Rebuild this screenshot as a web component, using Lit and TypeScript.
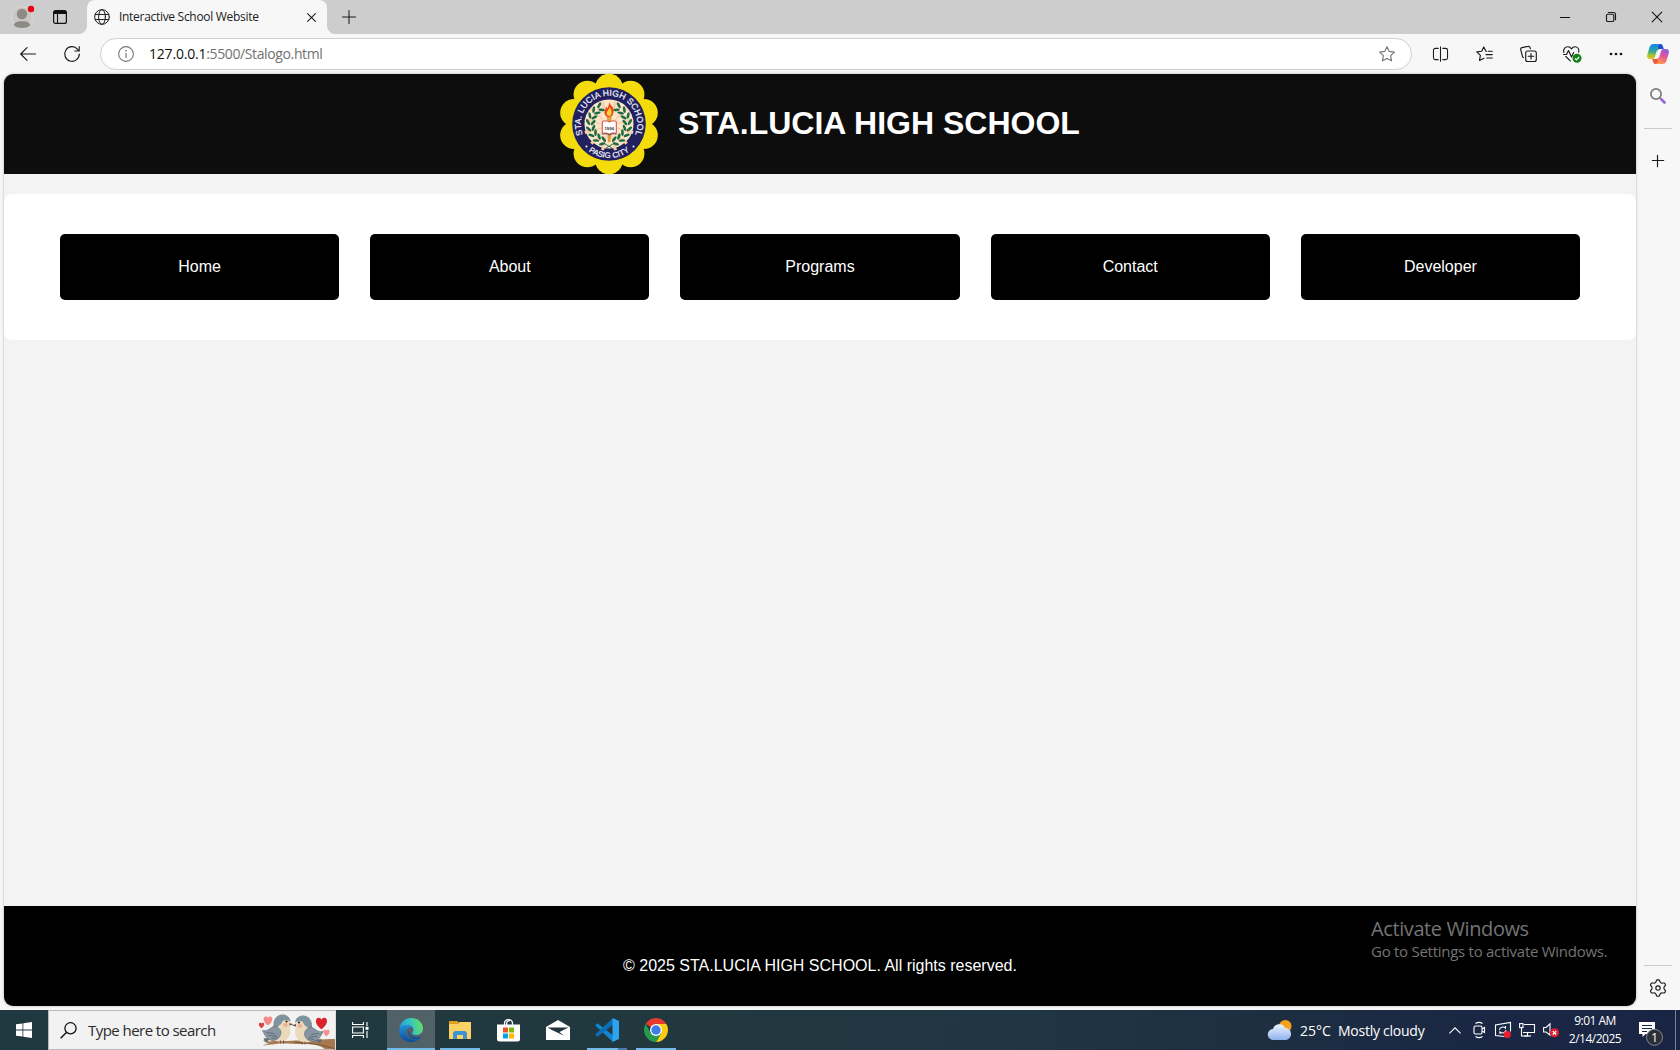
import { LitElement, html, svg, css } from "lit";
import { customElement } from "lit/decorators.js";

const iconStyles = css`
  svg { display: block; flex: none; overflow: visible; }
  .ln { fill: none; stroke: #1b1b1b; stroke-width: 1.15; stroke-linecap: round; stroke-linejoin: round; }
`;

@customElement("tab-strip")
class TabStrip extends LitElement {
  static styles = [iconStyles, css`
    :host { display: flex; height: 34px; background: #cdcdcd; align-items: stretch; }
    .cell { display: flex; align-items: center; justify-content: center; }
    .avatar { width: 44px; }
    .space { width: 32px; }
    .tab { display: flex; align-items: center; position: relative; box-sizing: border-box; width: 240px; margin-left: 11px; padding: 0 11px 0 7px; background: #f7f7f7; border-radius: 8px 8px 0 0; font-size: 12px; color: #1b1b1b; }
    .tab::before, .tab::after { content: ""; position: absolute; bottom: 0; width: 8px; height: 8px; }
    .tab::before { left: -8px; background: radial-gradient(circle at 0 0, #cdcdcd 7.5px, #f7f7f7 8.2px); }
    .tab::after { right: -8px; background: radial-gradient(circle at 100% 0, #cdcdcd 7.5px, #f7f7f7 8.2px); }
    .title { flex: 1; padding: 0 0 1px 9px; white-space: nowrap; letter-spacing: -0.3px; }
    .tab .ln, .add .ln { stroke-width: 1.05; }
    .add { width: 43px; }
    .fill { flex: 1; }
    .win { width: 46px; }
  `];
  render() {
    return html`
      <div class="cell avatar"><svg width="24" height="24" viewBox="0 0 24 24">
        <circle cx="12" cy="12" r="10.3" fill="#c9c7c5" stroke="#dedbd6" stroke-width=".8"/>
        <circle cx="12" cy="9" r="5.2" fill="#8d8985"/><path d="M4 20.5c0-3 3-4.300 8-4.300s8 1.300 8 4.300c-2 1.800-5 2.500-8 2.500s-6-.7-8-2.500z" fill="#8d8985"/>
        <circle cx="21" cy="4" r="3.200" fill="#e8000f"/></svg></div>
      <div class="cell space"><svg width="14" height="14" viewBox="0 0 14 14"><rect x=".6" y=".6" width="12.800" height="12.800" rx="2" fill="none" stroke="#111" stroke-width="1.200"/><path d="M.6 4V2.600a2 2 0 0 1 2-2h8.800a2 2 0 0 1 2 2V4z" fill="#111"/><path d="M4.500 4v9.400" stroke="#111" stroke-width="1.100"/></svg></div>
      <div class="tab">
        <svg width="16" height="16" viewBox="0 0 17 17"><g class="ln"><circle cx="8.500" cy="8.500" r="7.800"/><ellipse cx="8.500" cy="8.500" rx="3.600" ry="7.800"/><path d="M1.300 5.800h14.400M1.300 11.200h14.400"/></g></svg>
        <span class="title">Interactive School Website</span>
        <svg width="9" height="9" viewBox="0 0 9 9"><path class="ln" d="M.6.6l7.800 7.800M8.400.6L.6 8.400"/></svg>
      </div>
      <div class="cell add"><svg width="14" height="14" viewBox="0 0 14 14"><path class="ln" d="M7 .5v13M.5 7h13"/></svg></div>
      <div class="fill"></div>
      <div class="cell win"><svg width="10" height="10" viewBox="0 0 10 10"><path d="M0 5.500h10" stroke="#111"/></svg></div>
      <div class="cell win"><svg width="10" height="10" viewBox="0 0 10 10"><g class="ln"><rect x=".5" y="2.200" width="7.300" height="7.300" rx="1.300"/><path d="M2.300.5h5.200a2 2 0 0 1 2 2v5.200"/></g></svg></div>
      <div class="cell win"><svg width="10" height="10" viewBox="0 0 10 10"><path class="ln" d="M.2.2l9.600 9.600M9.800.2L.2 9.800"/></svg></div>
    `;
  }
}

@customElement("address-bar")
class AddressBar extends LitElement {
  static styles = [iconStyles, css`
    :host { display: flex; height: 40px; align-items: center; padding-left: 6px; background: #f7f7f7; }
    .cell { display: flex; align-items: center; justify-content: center; width: 44px; flex: none; }
    .copilot { width: 40px; }
    .omni { display: flex; align-items: center; box-sizing: border-box; width: 1312px; height: 32px; margin: 0 6px; padding: 0 16px 0 17px; border: 1px solid #d0d0d0; border-radius: 16px; background: #fff; font-size: 14px; color: #717171; }
    .url { flex: 1; padding: 0 0 2px 15px; letter-spacing: -0.38px; white-space: nowrap; }
    .host { color: #111; letter-spacing: -0.2px; }
  `];
  render() {
    const star = "M8 .7l2.250 4.700 5.150.7-3.750 3.600.9 5.150L8 12.400l-4.550 2.450.9-5.150L.6 6.100l5.150-.7z";
    return html`
      <div class="cell"><svg width="16" height="14" viewBox="0 0 16 14"><path class="ln" d="M15.500 7H.7M7 .7L.7 7 7 13.300"/></svg></div>
      <div class="cell"><svg width="16" height="16" viewBox="0 0 16 16"><path class="ln" d="M15.300 8A7.300 7.300 0 1 1 13.600 3.300L15 4.900M15.200.6V5h-4.400"/></svg></div>
      <div class="omni">
        <svg width="16" height="16" viewBox="0 0 16 16"><circle cx="8" cy="8" r="7.400" fill="none" stroke="#777" stroke-width="1.100"/><path d="M8 7v5" stroke="#777" stroke-width="1.200"/><circle cx="8" cy="4.700" r=".85" fill="#777"/></svg>
        <span class="url"><span class="host">127.0.0.1</span>:5500/Stalogo.html</span>
        <svg width="16" height="16" viewBox="0 0 16 16"><path class="ln" style="stroke:#777" d=${star}/></svg>
      </div>
      <div class="cell"><svg width="15" height="16" viewBox="0 0 16 16"><path class="ln" d="M5.500 2H2.500a2 2 0 0 0-2 2v8a2 2 0 0 0 2 2h3M10.500 2h3a2 2 0 0 1 2 2v8a2 2 0 0 1-2 2h-3M8 .2v15.600"/></svg></div>
      <div class="cell"><svg width="17" height="16" viewBox="0 0 17 16"><path class="ln" d="M10.600 5.200H9.900L7.800.9 5.700 5.200.8 5.900l3.600 3.500-.9 5 4.500-2.100M12.300 5.200h4M10 8.600h6.300M10.800 12h5.500"/></svg></div>
      <div class="cell"><svg width="17" height="16" viewBox="0 0 17 16"><g class="ln"><rect x="5.700" y="5" width="10.600" height="10.500" rx="2"/><path d="M11 7.500v5.500M8.200 10.200h5.600M3.500 11.700L2.600 10.800.7 3.600a1.700 1.700 0 0 1 1.200-2L8 .4a1.700 1.700 0 0 1 2 1.100l.4 1.300"/></g></svg></div>
      <div class="cell"><svg width="18" height="16" viewBox="0 0 18 16"><path class="ln" d="M.9 6.500C-.2 2.800 2.500.7 5 .8c1.800.1 2.800 1.100 3.500 2 .7-.9 1.700-1.900 3.500-2 2.500-.1 4.600 2.200 3.700 5.400M.5 8.500h3l2-4 3 6.500 2.200-4.400M2.800 10.500l4.500 4.300"/><circle cx="14" cy="12.300" r="4.500" fill="#16801a"/><path d="M12 12.400l1.400 1.400 2.700-2.800" fill="none" stroke="#fff" stroke-width="1.200"/></svg></div>
      <div class="cell"><svg width="14" height="4" viewBox="0 0 14 4"><circle cx="2" cy="2" r="1.350" fill="#111"/><circle cx="7" cy="2" r="1.350" fill="#111"/><circle cx="12" cy="2" r="1.350" fill="#111"/></svg></div>
      <div class="cell copilot"><svg width="22" height="20" viewBox="0 0 22 20">
        <defs>
          <linearGradient id="a" x1=".3" y1="0" x2=".2" y2="1"><stop offset="0" stop-color="#168ce8"/><stop offset=".45" stop-color="#2ba5a0"/><stop offset=".75" stop-color="#a4c832"/><stop offset="1" stop-color="#f0b91e"/></linearGradient>
          <linearGradient id="b" x1=".7" y1="0" x2=".4" y2="1"><stop offset="0" stop-color="#8c5ae6"/><stop offset=".45" stop-color="#e0559c"/><stop offset="1" stop-color="#ff9a4a"/></linearGradient>
        </defs>
        <path d="M11 0h2.500c1.600 0 2 .9 2.500 2.500L16.800 5H13c-1.700 0-2.300.8-2.800 2.500z" fill="#1b50c4"/>
        <path d="M11 20H8.500c-1.600 0-2-.9-2.500-2.500L5.200 15H9c1.700 0 2.300-.8 2.800-2.500z" fill="#ee5a38"/>
        <path d="M6.500 0h7c-1.600.3-2 1.500-2.500 3L8.200 12c-.6 2-1.200 3-3 3H3c-2.200 0-3.300-1.500-2.800-4L2.600 3C3.300 1 4.500 0 6.500 0z" fill="url(#a)"/>
        <path d="M15.500 20h-7c1.600-.3 2-1.500 2.500-3l2.800-9c.6-2 1.200-3 3-3H19c2.200 0 3.300 1.500 2.800 4l-2.400 8c-.7 2-1.900 3-3.900 3z" fill="url(#b)"/></svg></div>
    `;
  }
}

@customElement("school-seal")
class SchoolSeal extends LitElement {
  static styles = css`
    :host { display: block; width: 100px; height: 100px; }
    svg { display: block; }
    text { font-family: "Liberation Sans", Arial, sans-serif; fill: #f4f4ff; }
  `;
  render() {
    const petals = Array.from({ length: 10 }, (_, i) => {
      const a = (i * Math.PI) / 5;
      return svg`<circle cx=${50 + 36.800 * Math.sin(a)} cy=${50 - 36.500 * Math.cos(a)} r="13.800" fill="#f4dc0c"/>`;
    });
    const rays = Array.from({ length: 12 }, (_, i) => svg`<path d="M50 52L48.400 27h3.200z" transform="rotate(${i * 30 + 15} 50 52)" fill="#f8cfa8"/>`);
    const leaves = Array.from({ length: 8 }, (_, i) => {
      const a = ((-62 + i * 19) * Math.PI) / 180;
      const x = 18.500 * Math.cos(a);
      const y = 50 + 18.500 * Math.sin(a);
      const d = -62 + i * 19;
      return svg`<g transform="translate(${x} ${y}) rotate(${d - 90})"><ellipse cx="1.500" cy="-2" rx="3.300" ry="1.350" transform="rotate(-35)" /><ellipse cx="1.500" cy="2" rx="3.300" ry="1.350" transform="rotate(35)"/></g>`;
    });
    return html`<svg width="100" height="100" viewBox="0 0 100 100">
      ${petals}
      <circle cx="50" cy="50" r="38" fill="#f4dc0c"/>
      <circle cx="50" cy="50" r="36.800" fill="#22215f"/>
      <circle cx="50" cy="50" r="24.500" fill="#fbe6c9"/>
      ${rays}
      <g fill="#1c6b45"><g transform="translate(50 0)">${leaves}</g><g transform="translate(50 0) scale(-1 1)">${leaves}</g></g>
      <path d="M46 70l7 4M54 70l-7 4" stroke="#1c6b45" stroke-width=".9"/>
      <path d="M50 28c1 3 5.500 5 4.500 10-.3 3-2 5-4.500 5s-5-2-4.500-5.500c.3-2 1.500-3 1.700-5 .8.5 1 1.200 1.300 2 .8-2 1.500-3.500 1.500-6.500z" fill="#e9471c"/>
      <path d="M50.500 33c1 2 2.500 3.500 2 6-.3 2-1.200 3-2.500 3s-2.700-1.300-2.300-3.500c.3-1.500 2.300-2.500 2.800-5.500z" fill="#ffd23a"/>
      <path d="M48 43h4.500l-.8 24-1.500 2-1.400-2z" fill="#e79a3b"/>
      <path d="M43.300 47.500c2.500-1 5-.8 7 .5 2-1.300 4.500-1.500 7-.5v12c-2.500-1-5-.5-7 .7-2-1.200-4.500-1.700-7-.7z" fill="#fdfdfd" stroke="#c63c36" stroke-width=".9"/>
      <path d="M43.300 60.300c2.500-1 5-.5 7 .7 2-1.200 4.500-1.700 7-.7" fill="none" stroke="#444" stroke-width=".8"/>
      <text x="50.300" y="55.500" font-size="4.400" font-weight="700" text-anchor="middle" style="fill:#333">1996</text>
      <defs><path id="top" d="M25.120 63.230A28.180 28.180 0 1 1 74.880 63.230"/><path id="bot" d="M20 66A34 34 0 0 0 80 66"/></defs>
      <text font-size="8.600" stroke="#f4f4ff" stroke-width=".2"><textPath href="#top" startOffset="50%" text-anchor="middle" textLength="110">STA. LUCIA HIGH SCHOOL</textPath></text>
      <text font-size="7.900" stroke="#f4f4ff" stroke-width=".2"><textPath href="#bot" startOffset="50%" text-anchor="middle" textLength="44">PASIG CITY</textPath></text>
      <circle cx="27.500" cy="72.500" r="1" fill="#fff"/><circle cx="74.500" cy="72.500" r="1" fill="#fff"/>
    </svg>`;
  }
}

@customElement("school-page")
class SchoolPage extends LitElement {
  static styles = css`
    :host { display: flex; flex-direction: column; position: relative; width: 1632px; height: 932px; border-radius: 9px; overflow: hidden; background: #f3f3f3; box-shadow: 0 0 3px rgba(0, 0, 0, .28); font-family: "Liberation Sans", Arial, sans-serif; font-size: 16px; color: #fff; }
    header { display: flex; align-items: center; justify-content: center; gap: 20px; height: 100px; background: #0d0d0d; }
    h1 { margin: 0 1px 0 -1px; padding-bottom: 2px; font-size: 32px; line-height: 36px; }
    nav { display: grid; grid-template-columns: repeat(5, 1fr); gap: 31px; margin-top: 20px; padding: 40px 56px; background: #fff; border-radius: 8px; }
    a { display: flex; align-items: center; justify-content: center; height: 66px; border-radius: 5px; background: #000; }
    footer { display: flex; align-items: center; justify-content: center; box-sizing: border-box; height: 100px; margin-top: auto; padding-top: 20px; background: #000; }
    .mark { position: absolute; left: 1367px; top: 841px; color: #747474; font-family: "Open Sans", "Noto Sans", sans-serif; white-space: nowrap; }
    .big { font-size: 20px; line-height: 27px; letter-spacing: -.4px; }
    .small { font-size: 15px; line-height: 19px; letter-spacing: -.27px; }
  `;
  render() {
    return html`
      <header><school-seal></school-seal><h1>STA.LUCIA HIGH SCHOOL</h1></header>
      <nav>${["Home", "About", "Programs", "Contact", "Developer"].map((t) => html`<a>${t}</a>`)}</nav>
      <footer>© 2025 STA.LUCIA HIGH SCHOOL. All rights reserved.</footer>
      <div class="mark"><div class="big">Activate Windows</div><div class="small">Go to Settings to activate Windows.</div></div>
    `;
  }
}

@customElement("edge-sidebar")
class EdgeSidebar extends LitElement {
  static styles = [iconStyles, css`
    :host { display: flex; flex-direction: column; align-items: center; width: 28px; padding: 14px 8px 0; }
    .rule { width: 28px; height: 1px; background: #cbcbcb; flex: none; }
    .one { margin: 24px 0 0; }
    .plus { margin-top: 26px; }
    .two { margin-top: auto; }
    .gear { margin: 13px 0 9px; }
  `];
  render() {
    const pts = Array.from({ length: 48 }, (_, i) => {
      const a = (i / 48) * Math.PI * 2;
      const r = 7.100 + 1.150 * Math.tanh(2.200 * Math.cos(a * 6));
      return `${(9 + r * Math.sin(a)).toFixed(2)} ${(9 - r * Math.cos(a)).toFixed(2)}`;
    }).join("L");
    return html`
      <svg width="16" height="16" viewBox="0 0 16 16"><circle cx="6" cy="6" r="5.100" fill="none" stroke="#7b7b7b" stroke-width="1.700"/><path d="M9.700 9.700l2 2" stroke="#7b7b7b" stroke-width="1.800"/><path d="M11.500 11.500l3 3" stroke="#9a67d8" stroke-width="2.800" stroke-linecap="round"/></svg>
      <div class="rule one"></div>
      <svg class="plus" width="12" height="12" viewBox="0 0 12 12"><path class="ln" d="M5.500.3v11.400M.3 5.500h11.400"/></svg>
      <div class="rule two"></div>
      <svg class="gear" width="18" height="18" viewBox="0 0 18 18"><path class="ln" d="M${pts}z"/><circle class="ln" cx="9" cy="9" r="2.200"/></svg>
    `;
  }
}

@customElement("task-bar")
class TaskBar extends LitElement {
  static styles = [iconStyles, css`
    :host { display: flex; height: 40px; background: linear-gradient(90deg, #20383f 0, #21383f 42%, #203643 60%, #1d2e41 76%, #1a2744 88%, #1a2545 100%); color: #fff; }
    .cell { display: flex; align-items: center; justify-content: center; position: relative; width: 49px; flex: none; }
    .start { width: 48px; }
    .view { width: 51px; box-sizing: border-box; padding-right: 2px; }
    .edge { width: 48px; background: #506268; }
    .run::after, .edge::after { content: ""; position: absolute; left: 5px; bottom: 0; width: 40px; height: 2px; background: #76b9ed; }
    .edge::after { left: 0; width: 48px; }
    .multi::after { background: linear-gradient(90deg, #76b9ed 31px, #4a7aa8 31px); }
    .search { display: flex; align-items: center; box-sizing: border-box; width: 288px; border: 1px solid #b9b9b9; border-right-color: #ddd; background: #f2f2f2; color: #2b2b2b; font-size: 15px; padding-left: 11px; }
    .hint { flex: 1; padding-left: 11px; letter-spacing: -.55px; white-space: nowrap; }
    .weather { display: flex; align-items: center; margin-left: auto; width: 175px; font-size: 14px; white-space: nowrap; }
    .temp { width: 38px; padding-left: 8px; }
    .sky { letter-spacing: -.25px; }
    .tray { width: 24px; }
    .w { fill: none; stroke: #fff; stroke-width: 1.100; }
    .clock { display: flex; flex-direction: column; align-items: center; width: 64px; padding-top: 2px; box-sizing: border-box; font-size: 12px; line-height: 17.500px; letter-spacing: -.5px; }
    .notif { width: 40px; }
    .desk { width: 8px; padding-right: 0; }
    .peek { width: 4px; border-left: 1px solid #76808f; }
  `];
  bird() {
    return svg`
      <path d="M-17 10l9-1-7 5z" fill="#5f7079"/>
      <path d="M-17 9C-10 5-8 1-7-4c0-6 4-10 9-10 5 0 8 4 8 8 0 3-1 4 0 8 0 6-4 11-10 11-7 0-10-3-17-4z" fill="#ead9ba"/>
      <path d="M-7-4c0-6 4-10 9-10 5 0 8 4 8 7-6-3-8-1-9 2-3 2-4 5-8 4z" fill="#7d949f"/>
      <path d="M-18 2C-14 3-12 1-9-1-7-3-2-2 0 2c2 5-3 10-8 10-4 0-8-5-10-10z" fill="#8796a2" stroke="#56666f" stroke-width=".6"/>
      <path d="M-14 4l8 1M-12 7l8 .5M-9 10l6-1" stroke="#48606d" stroke-width=".7"/>
      <circle cx="5" cy="-3.500" r="2.100" fill="#ecae99"/><circle cx="6" cy="-7" r="1.100" fill="#26201c"/>
      <path d="M9-5.500l4 1.500-4 1z" fill="#635145"/>
      <path d="M0 12v3M3 12v3" stroke="#65493a" stroke-width=".8"/>`;
  }
  heart(x: number, y: number, s: number, c: string) {
    return svg`<path transform="translate(${x} ${y}) scale(${s})" d="M0 5C-7 0-5-5-2.500-5-1-5 0-4 0-3c0-1 1-2 2.500-2C5-5 7 0 0 5z" fill=${c}/>`;
  }
  render() {
    return html`
      <div class="cell start"><svg width="16" height="16" viewBox="0 0 16 16"><path d="M0 2.300l6.500-.9v6.200H0zM7.300 1.300L16 0v7.600H7.300zM0 8.400h6.500v6.200L0 13.700zM7.300 8.400H16V16l-8.700-1.300z" fill="#fff"/></svg></div>
      <div class="search">
        <svg width="17" height="17" viewBox="0 0 17 17"><circle cx="10.500" cy="6.300" r="5.600" fill="none" stroke="#111" stroke-width="1.300"/><path d="M6.600 10.300L.6 16.300" stroke="#111" stroke-width="1.400"/></svg>
        <span class="hint">Type here to search</span>
        <svg width="76" height="38" viewBox="0 0 76 38">
          <path d="M4 29c4 1 7 2 10 1 5-1 8 0 14 0 12-1 22 0 30-1 6-1 12-1 18-1v10H66c-5-4-12-5-22-5-12 0-20-1-27 0-5 1-9 0-13 2 2-2 4-2 6-3-3 0-4-1-6-3z" fill="#a87950"/>
          <path d="M35 31c12 1 28 2 41 7" stroke="#7e5637" fill="none"/>
          <g transform="translate(21.500 17.500)">${this.bird()}</g><g transform="translate(46 18.500) scale(-1 1)">${this.bird()}</g>
          ${this.heart(9, 10, .9, "#f58a85")}${this.heart(2.500, 14.500, .55, "#e33d3d")}${this.heart(62.500, 12.500, 1.150, "#d9222d")}${this.heart(67.500, 22, .65, "#f78d8d")}
        </svg>
      </div>
      <div class="cell view"><svg width="17" height="16" viewBox="0 0 17 16"><path class="w" d="M.6 0v2.500h10.800V0M.6 16v-2.500h10.800V16M.6 5h10.800v6H.6zM15 0v4M15 9v7"/><path d="M13.500 4.800h3v3h-3z" fill="#fff"/></svg></div>
      <div class="cell edge"><svg width="24" height="24" viewBox="0 0 24 24">
        <defs><linearGradient id="e1" x1="0" y1=".6" x2="1" y2=".4"><stop offset="0" stop-color="#1f9fdc"/><stop offset=".5" stop-color="#36c4c4"/><stop offset="1" stop-color="#66e05c"/></linearGradient>
        <linearGradient id="e2" x1="0" y1="0" x2="0" y2="1"><stop offset="0" stop-color="#2492dc"/><stop offset="1" stop-color="#0c4b9b"/></linearGradient></defs>
        <path d="M.4 10.500C1.500 4 6.500 0 12.200 0 19 0 24 5 24 10.500c0 4-3 6.500-6.800 6.500-2.200 0-4-.8-4-1.800 0-.8 1.200-1.300 1.200-3.500 0-3-2.700-4.700-6-4.700-3.700 0-6.500 1-8 3.500z" fill="url(#e1)"/>
        <path d="M.2 11.500C1.300 8 4.500 6.800 8 7c3 .2 5.200 1.300 6 3-4-1.500-7 1-7 4.500 0 5 5 7.500 9 7 2.500-.3 4.500-1.300 6-2.500C20 22 16 24 12 24 5 24-.5 18.500.2 11.500z" fill="url(#e2)"/>
        <path d="M9.500 12.500C8 19 13.500 22 17.500 21.200c2-.4 4-1.500 5.300-3-5 2.500-12.800.8-13.300-5.700z" fill="#0e55a4"/></svg></div>
      <div class="cell run"><svg width="22" height="18" viewBox="0 0 22 18"><path d="M0 0h8.500l1.500 2v16H.8L0 17z" fill="#dfa019"/><path d="M0 3h9l1.500-2H22v17H0z" fill="#fdd264"/><path d="M4 18v-5.500A2.500 2.500 0 0 1 6.500 10h9a2.500 2.500 0 0 1 2.500 2.500V18h-4v-4H8v4z" fill="#3f93d3"/></svg></div>
      <div class="cell"><svg width="23" height="23" viewBox="0 0 23 23"><path d="M7.500 6V4.500C7.500 2 9 .6 11.500.6S15.500 2 15.500 4.500V6M9.700 6V4c0-1.500 1.500-2.500 3-2" fill="none" stroke="#fff" stroke-width="1.300"/><path d="M0 5.500h23V20a2.500 2.500 0 0 1-2.500 2.500h-18A2.500 2.500 0 0 1 0 20z" fill="#fff"/><path fill="#f25022" d="M6 8.500h5v5H6z"/><path fill="#7fba00" d="M12 8.500h5v5h-5z"/><path fill="#00a4ef" d="M6 14.500h5v5H6z"/><path fill="#ffb900" d="M12 14.500h5v5h-5z"/></svg></div>
      <div class="cell"><svg width="24" height="20" viewBox="0 0 24 20"><path d="M0 7L12 0l12 7v13H0z" fill="#fff"/><path d="M1.500 7.500h21l-9 4.500 4.500 3.800L6 10z" fill="#20353e"/></svg></div>
      <div class="cell run multi"><svg width="24" height="24" viewBox="0 0 24 24"><path d="M0 7.300l2.500-2L18 17.300V24z" fill="#1384cf"/><path d="M0 16.700l2.500 2L18 6.700V0z" fill="#0b70b8"/><path d="M17.500 0L24 3v18l-6.500 3z" fill="#2ea4ec"/></svg></div>
      <div class="cell run"><svg width="24" height="24" viewBox="0 0 24 24"><path d="M12 12L1.610 6A12 12 0 0 1 22.390 6z" fill="#e33b2e"/><path d="M12 6h10.390A12 12 0 0 1 12 24l5.200-9z" fill="#fdcb12"/><path d="M1.610 6A12 12 0 0 0 12 24l5.200-9L12 12 6.800 15z" fill="#279a4b"/><circle cx="12" cy="12" r="6" fill="#fff"/><circle cx="12" cy="12" r="4.700" fill="#3d7de8"/></svg></div>
      <div class="weather">
        <svg width="24" height="20" viewBox="0 0 24 20"><defs><linearGradient id="c" x1="0" y1="0" x2="0" y2="1"><stop offset="0" stop-color="#eef4ff"/><stop offset="1" stop-color="#8fb2ee"/></linearGradient></defs><circle cx="17.300" cy="6.200" r="6.200" fill="#f7a11b"/><path d="M5.500 20A5.500 5.500 0 0 1 5 9a6.500 6.500 0 0 1 12-1.300A6.200 6.200 0 0 1 18 20z" fill="url(#c)"/></svg>
        <span class="temp">25°C</span><span class="sky">Mostly cloudy</span>
      </div>
      <div class="cell tray"><svg width="12" height="7" viewBox="0 0 12 7"><path class="w" d="M.4 6.400L6 .8l5.600 5.600"/></svg></div>
      <div class="cell tray"><svg width="12" height="16" viewBox="0 0 12 16"><path class="w" d="M2.500 1.500C4.500.2 7.500.2 9.500 1.500M2.500 14.500c2 1.300 5 1.300 7 0M9 7l2.500-1.500v5L9 9"/><rect class="w" x="1" y="4" width="8" height="8" rx="1.500"/></svg></div>
      <div class="cell tray"><svg width="16" height="16" viewBox="0 0 16 16"><path class="w" d="M10 14.500l-9.500-1V3l15-2.500v9M4.500 8a3.500 3 0 0 1 6-2V4M11 8a3.500 3 0 0 1-6 2v2"/><circle cx="12.300" cy="12.500" r="3.600" fill="#ec1c2c"/></svg></div>
      <div class="cell tray"><svg width="16" height="14" viewBox="0 0 16 14"><path class="w" d="M5 1.500h10.500v8H4M2.500 4.500v8.500h7M8.500 9.500v3.500"/><rect class="w" x=".6" y=".6" width="3.400" height="4"/><path class="w" d="M5 13h7"/></svg></div>
      <div class="cell tray"><svg width="16" height="14" viewBox="0 0 16 14"><path class="w" d="M.6 4.500h2.500L7 .8v11.400L3.100 9H.6z"/><circle cx="11.500" cy="9.800" r="4.500" fill="#e01f30"/><path d="M9.800 8.100l3.400 3.400M13.200 8.100l-3.400 3.400" stroke="#fff" stroke-width="1.300"/></svg></div>
      <div class="clock"><span>9:01 AM</span><span>2/14/2025</span></div>
      <div class="cell notif"><svg width="24" height="24" viewBox="0 0 24 24" style="margin:7px -8px 0 0"><path d="M0 0h16v12H6.500L3.500 15v-3H0z" fill="#fff"/><path d="M3 3.500h10M3 6.500h10M3 9.500h5" stroke="#1a2744"/><circle cx="15.500" cy="15.300" r="8" fill="#2b2f36" stroke="#868a92" stroke-width="1"/><text x="15.500" y="19.500" text-anchor="middle" font-size="12.500" fill="#fff" font-family="Open Sans">1</text></svg></div>
      <div class="desk"></div><div class="peek"></div>
    `;
  }
}

@customElement("app-root")
class AppRoot extends LitElement {
  static styles = css`
    :host { display: flex; flex-direction: column; width: 1680px; height: 1050px; overflow: hidden; background: #f7f7f7; font-family: "Open Sans", "Noto Sans", sans-serif; }
    main { display: flex; height: 932px; margin-bottom: 4px; padding-left: 4px; }
  `;
  render() {
    return html`
      <tab-strip></tab-strip>
      <address-bar></address-bar>
      <main><school-page></school-page><edge-sidebar></edge-sidebar></main>
      <task-bar></task-bar>
    `;
  }
}
